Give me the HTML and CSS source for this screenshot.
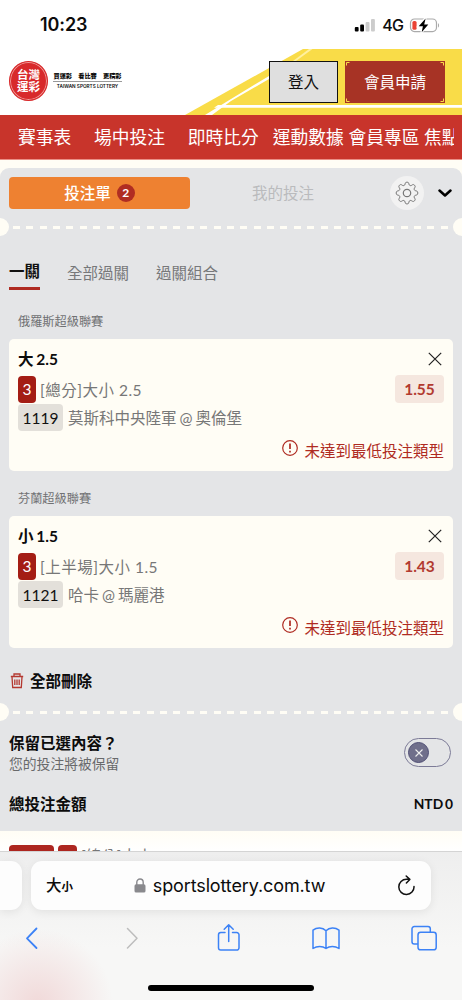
FILE: index.html
```html
<!DOCTYPE html>
<html lang="zh-Hant">
<head>
<meta charset="utf-8">
<title>台灣運彩</title>
<link rel="stylesheet" href="styles.css">
</head>
<body>
<div class="screen">
  <div class="status">
    <span class="clock">10:23</span>
    <div class="status-right">
      <svg width="22" height="14" viewBox="0 0 22 14"><rect x="0.8" y="9" width="3.8" height="4.6" rx="1"/><rect x="6.2" y="6.5" width="3.8" height="7.1" rx="1"/><rect x="11.6" y="4" width="3.9" height="9.6" rx="1" fill="#ccc"/><rect x="17" y="1" width="3.9" height="12.6" rx="1" fill="#ccc"/></svg>
      <span class="net">4G</span>
      <svg class="battery" width="31" height="17" viewBox="0 0 31 17"><rect x="1.5" y="2" width="26" height="12.6" rx="4" fill="none" stroke="#aaa" stroke-width="1.2"/><rect x="3.4" y="4" width="4.2" height="8.8" rx="1.6" fill="#ea4335"/><path d="M29 6.2c1.4.5 1.4 3.7 0 4.200z" fill="#aaa"/><path d="M16.600 1 9.300 9.300h4.200L12.400 15.500l7-8.100h-4.100z" stroke="#fff" stroke-width="2"/><path d="M16.600 1.500 9.700 9.200h4.200L12.700 15.200l6.600-7.700h-4.100z"/></svg>
    </div>
  </div>

  <header class="header">
    <svg class="stripes" width="462" height="66" viewBox="0 0 462 66"><path d="M303 0H462V66H185z" fill="#f9dc48"/><path d="M205 66 231 50 269 27V30L231 52 212 66z" fill="#fff"/><path d="M218 66 231 57.500V66z" fill="#f9dc48"/><path d="M293 12 309 0H312.500L296 12z" fill="#fff0a0"/><path d="M218 56H462V58.800H214z" fill="#fff"/></svg>
    <div class="brand">
      <div class="seal"><span>台灣</span><span>運彩</span></div>
      <div class="slogan"><b>買運彩　看比賽　更精彩</b><i>TAIWAN SPORTS LOTTERY</i></div>
    </div>
    <div class="account">
      <button class="login">登入</button>
      <button class="register"><svg width="100" height="42" viewBox="0 0 100 42"><path d="M1.500 4.500V1.500H4.500M95.500 1.500h3v3M98.500 37.500v3h-3M4.500 40.500h-3v-3" fill="none" stroke="#f9dc48"/></svg>會員申請</button>
    </div>
  </header>

  <nav class="nav"><div class="nav-track"><a>賽事表</a><a>場中投注</a><a>即時比分</a><a class="tight">運動數據</a><a class="tight">會員專區</a><a>焦點</a></div></nav>

  <main class="slip">
    <div class="slip-head">
      <div class="tab-active">投注單<span class="count">2</span></div>
      <div class="tab-muted">我的投注</div>
      <span class="gear"><svg width="24" height="24" viewBox="0 0 24 24" fill="none" stroke="#777" stroke-width="1"><path d="M12 1.200c1.500 0 1.700.6 1.900 1.900.2 1.400 1.700 2 2.800 1.200 1.100-.9 1.800-1.100 2.800-.1s.8 1.700 0 2.800c-.8 1.100-.2 2.600 1.200 2.800 1.300.2 2.100.6 2.100 2.200s-.8 2-2.100 2.200c-1.400.2-2 1.700-1.200 2.800.8 1.100 1 1.800 0 2.800s-1.700.8-2.800 0c-1.100-.9-2.600-.2-2.800 1.200-.2 1.300-.4 1.900-1.900 1.900s-1.700-.6-1.900-1.900c-.2-1.400-1.700-2.100-2.800-1.200-1.100.8-1.800 1-2.800 0s-.8-1.700 0-2.800c.8-1.100.2-2.600-1.200-2.800C2 14 1.200 13.600 1.200 12S2 10 3.300 9.800C4.700 9.600 5.300 8.100 4.500 7c-.8-1.100-1-1.800 0-2.800s1.700-.8 2.800.1c1.100.8 2.600.2 2.800-1.200.2-1.300.4-1.900 1.900-1.900z" stroke-linejoin="round"/><circle cx="12" cy="12" r="3.700" stroke-width="1.200"/></svg></span>
      <svg class="chev" width="14" height="9" viewBox="0 0 14 9"><path d="M1.500 1.500 7 6.500 12.500 1.500" fill="none" stroke="#000" stroke-width="2.500" stroke-linecap="round" stroke-linejoin="round"/></svg>
    </div>
    <div class="perforation"></div>

    <div class="modes"><span class="on">一關</span><span>全部過關</span><span>過關組合</span></div>

    <div class="league">俄羅斯超級聯賽</div>
    <section class="card">
      <div class="pick"><b>大 2.5</b><svg width="14" height="14" viewBox="0 0 14 14"><path d="M.8.8 13.200 13.200M13.200.8.8 13.200" stroke="#222" stroke-width="1.200"/></svg></div>
      <div class="market"><em class="legs">3</em><span>[總分]大小 2.5</span><strong class="odds">1.55</strong></div>
      <div class="match"><em class="code">1119</em><span>莫斯科中央陸軍 @ 奧倫堡</span></div>
      <div class="alert"><svg width="16" height="16" viewBox="0 0 16 16"><circle cx="8" cy="8" r="7.300" fill="none" stroke="#af2b22" stroke-width="1.200"/><path d="M8 3.500V9M8 10.700v1.800" stroke="#af2b22" stroke-width="1.700"/></svg>未達到最低投注類型</div>
    </section>

    <div class="league second">芬蘭超級聯賽</div>
    <section class="card">
      <div class="pick"><b>小 1.5</b><svg width="14" height="14" viewBox="0 0 14 14"><path d="M.8.8 13.200 13.200M13.200.8.8 13.200" stroke="#222" stroke-width="1.200"/></svg></div>
      <div class="market"><em class="legs">3</em><span>[上半場]大小 1.5</span><strong class="odds">1.43</strong></div>
      <div class="match"><em class="code">1121</em><span>哈卡 @ 瑪麗港</span></div>
      <div class="alert"><svg width="16" height="16" viewBox="0 0 16 16"><circle cx="8" cy="8" r="7.300" fill="none" stroke="#af2b22" stroke-width="1.200"/><path d="M8 3.500V9M8 10.700v1.800" stroke="#af2b22" stroke-width="1.700"/></svg>未達到最低投注類型</div>
    </section>

    <div class="clear"><svg width="14" height="16" viewBox="0 0 14 16" fill="none" stroke="#b43830" stroke-width="1.300"><path d="M.8 3.500h12.400M4 3.300V1h6v2.300M2 3.700l.7 10.800h8.600L12 3.700M4.800 6.500v5.500M7 6.500v5.500M9.200 6.500v5.500"/></svg>全部刪除</div>
    <div class="perforation"></div>

    <div class="keep">
      <div><h2>保留已選內容？</h2><p>您的投注將被保留</p></div>
      <div class="toggle"><span><svg width="8" height="8" viewBox="0 0 8 8"><path d="M.5.5 7.500 7.500M7.500.5.5 7.500" stroke="#eee" stroke-width="1.100"/></svg></span></div>
    </div>
    <div class="total"><span>總投注金額</span><span class="sum">NTD 0</span></div>
  </main>

  <div class="peek"><i class="peek-a"></i><i class="peek-b"></i><span>[總分]大小</span></div>

  <footer class="browser">
    <div class="bar-row">
      <div class="prev-tab"></div>
      <div class="address">
        <span class="aa">大<small>小</small></span>
        <span class="url"><svg width="12" height="15" viewBox="0 0 12 15"><path d="M2.800 7V4.200a3.200 3.200 0 0 1 6.400 0V7" fill="none" stroke="#89898d" stroke-width="1.400"/><rect x=".5" y="6.300" width="11" height="8.300" rx="1.600" fill="#89898d"/></svg>sportslottery.com.tw</span>
        <svg class="reload" width="19" height="21" viewBox="0 0 19 21" fill="none" stroke="#111" stroke-width="1.500" stroke-linecap="round" stroke-linejoin="round"><path d="M17 11.500A7.600 7.600 0 1 1 9.500 4.300h3M9.200 1 12.800 4.400 9.400 8"/></svg>
      </div>
    </div>
    <div class="tools">
      <svg width="28" height="30" viewBox="0 0 28 30"><path d="M18.500 5.500 9 15.300 18.500 25" stroke-width="1.800"/></svg>
      <svg class="off" width="28" height="30" viewBox="0 0 28 30"><path d="M11.500 5.500 21 15.300 11.500 25" stroke-width="1.500"/></svg>
      <svg width="28" height="30" viewBox="0 0 28 30"><path d="M11 9.500H6.800a2.300 2.300 0 0 0-2.300 2.300v13a2.300 2.300 0 0 0 2.300 2.300h15.900a2.300 2.300 0 0 0 2.300-2.300v-13a2.300 2.300 0 0 0-2.300-2.300H18.500M14.700 18.500V2M10.200 6.200 14.700 1.700l4.500 4.500"/></svg>
      <svg width="28" height="30" viewBox="0 0 28 30"><path d="M14 7.800C10.500 4.400 5 4.200 1 7.200V25.500C5 22.800 10.500 22.800 14 25.500 17.500 22.800 23 22.800 27 25.500V7.200C23 4.200 17.500 4.400 14 7.800V25.500"/></svg>
      <svg width="28" height="30" viewBox="0 0 28 30"><path d="M7.500 21H4.300A2.300 2.300 0 0 1 2 18.700V5.800a2.300 2.300 0 0 1 2.300-2.300H18a2.300 2.300 0 0 1 2.300 2.300V9"/><rect x="8" y="9.300" width="18.200" height="17.500" rx="2.600"/></svg>
    </div>
    <div class="home"></div>
  </footer>
</div>
</body>
</html>
```

FILE: styles.css
```css
* { box-sizing: border-box; }
body { margin: 0; }
.screen {
  width: 462px; height: 1000px; overflow: hidden;
  display: flex; flex-direction: column;
  background: #fffdf5; color: #0c0c0c;
  font: 15.5px/20px Lato, "Noto Sans CJK TC", sans-serif;
}
svg { display: block; flex: none; }
em, i { font-style: normal; }

.status {
  height: 49px; flex: none; padding: 1px 25px 0 40px;
  display: flex; align-items: center; justify-content: space-between;
  background: #fff; font-family: Inter, sans-serif;
}
.clock { font-size: 18px; font-weight: 600; letter-spacing: -0.1px; }
.status-right { display: flex; align-items: center; gap: 6px; padding-right: 0; }
.net { font-size: 16px; font-weight: 500; letter-spacing: -0.9px; }
.battery { margin: 0 -3px 0 0; }

.header {
  position: relative; height: 66px; flex: none;
  padding: 12px 17px 0 9px; background: #fff;
  display: flex; justify-content: space-between; align-items: flex-start;
}
.stripes { position: absolute; left: 0; top: 0; }
.brand { position: relative; display: flex; gap: 5px; align-items: center; }
.seal {
  width: 39px; height: 40px; border-radius: 50%; background: #d8292b;
  border: 1px solid #d8292b; box-shadow: inset 0 0 0 1px #ef9b98;
  color: #fff; font-weight: 700; font-size: 11.500px; line-height: 12px;
  display: flex; flex-direction: column; align-items: center; justify-content: center;
}
.slogan { width: 69px; display: flex; flex-direction: column; text-align: center; white-space: nowrap; }
.slogan b { font-size: 6.200px; font-weight: 900; line-height: 10px; border-bottom: 1px solid #999; }
.slogan i { font: 600 4.700px/9px Inter, sans-serif; }
.account { position: relative; display: flex; gap: 7px; }
.account button { height: 42px; padding: 0; font: inherit; }
.login { width: 69px; background: #dfdfdf; border: 1px solid #111; color: #111; }
.register { position: relative; width: 100px; background: #a73325; border: 0; color: #fff; }
.register svg { position: absolute; left: 0; top: 0; }

.nav {
  height: 45px; flex: none; margin-bottom: 8px; padding: 0 8px 0 18px;
  background: #c8342b; border-bottom: 1px solid #ea8f86;
}
.nav-track {
  height: 44px; display: flex; align-items: center; overflow: hidden;
  color: #fff; font-size: 17.750px; white-space: nowrap;
}
.nav a { margin-right: 22.700px; flex: none; }
.nav a:nth-child(3) { margin-right: 14px; }
.nav .tight { margin-right: 4.700px; }

.slip { height: 663px; flex: none; background: #e4e5e7; border-radius: 9px 9px 0 0; }
.slip-head { height: 50px; padding: 0 10px 0 9px; display: flex; align-items: center; }
.tab-active {
  width: 181px; height: 32px; border-radius: 4px; background: #ee8131; color: #fff;
  display: flex; align-items: center; justify-content: center; gap: 6px; font-weight: 500;
}
.count {
  width: 18px; height: 18px; border-radius: 50%; background: #b02d22;
  font-size: 12px; line-height: 18px; text-align: center; font-weight: 700;
}
.tab-muted { flex: 1; text-align: center; padding-right: 14px; color: #babbbd; }
.gear {
  width: 34px; height: 34px; border-radius: 50%; background: #f2f2f2;
  display: flex; align-items: center; justify-content: center; margin: -1px 14px 0 0;
}
.perforation {
  height: 18px; display: flex; align-items: center; justify-content: space-between;
  background: repeating-linear-gradient(90deg, #fffdf5 0 7px, transparent 7px 13.370px) 13px 8px / 436px 3px no-repeat;
}
.perforation::before, .perforation::after {
  content: ""; width: 9px; height: 18px; background: #fffdf5; border-radius: 0 9px 9px 0;
}
.perforation::after { border-radius: 9px 0 0 9px; }

.modes { height: 54px; padding: 26px 9px 0; display: flex; gap: 27px; color: #77787a; line-height: 22px; }
.modes span { height: 28px; }
.modes .on { height: 28px; line-height: 19px; font-weight: 700; color: #111; border-bottom: 3px solid #af2b22; }
.league { height: 49px; padding: 22px 18px 0; font-size: 12.200px; color: #707173; }
.league.second { height: 45px; padding-top: 18px; }
.card { height: 132px; margin: 0 9px; padding: 10px 9px 0; background: #fffdf5; border-radius: 5px; }
.pick { height: 20px; display: flex; justify-content: space-between; align-items: center; padding-right: 2px; }
.pick b { word-spacing: -1px; }
.market, .match { display: flex; align-items: center; color: #777; }
.market { height: 28px; margin-top: 6px; }
.market span { letter-spacing: .5px; margin-left: 4px; padding-top: 1px; }
.legs { width: 18px; height: 27px; line-height: 27px; border-radius: 4px; background: #a41d14; color: #fff; text-align: center; }
.odds { width: 49px; height: 28px; line-height: 28px; margin-left: auto; border-radius: 4px; background: #f5e7df; color: #b23a30; text-align: center; }
.match { height: 27px; margin-top: 1px; }
.match span { margin-left: 5px; word-spacing: -1px; }
.code { width: 45px; height: 27px; line-height: 28px; border-radius: 4px; background: #e3e0da; color: #111; text-align: center; }
.alert { height: 20px; line-height: 22px; margin-top: 9px; display: flex; justify-content: flex-end; gap: 6px; color: #af2b22; }
.clear { height: 55px; padding: 14px 10px 0; display: flex; gap: 6px; font-weight: 700; line-height: 39px; }
.clear svg { margin-top: 11px; }

.keep { display: flex; justify-content: space-between; padding: 12px 11px 0 9px; height: 66px; }
.keep h2 { margin: 0; font-size: 15.500px; line-height: 20px; }
.keep p { margin: 1px 0 0; font-size: 13.800px; color: #68696b; }
.toggle { width: 47px; height: 29px; margin-top: 5px; padding: 3px; border: 1px solid #7c7b97; border-radius: 15px; }
.toggle span { width: 21px; height: 21px; border-radius: 50%; background: #706f8b; border: 1px solid #504f75; display: flex; align-items: center; justify-content: center; }
.total { display: flex; justify-content: space-between; padding: 7px 9px 0; font-weight: 700; }
.sum { font-size: 13.800px; word-spacing: -1.500px; }

.peek {
  height: 20px; flex: none; padding: 14px 9px 0; display: flex; gap: 4px; overflow: hidden;
  background: linear-gradient(#fffdf5, #fff); color: #777;
}
.peek i { height: 27px; border-radius: 4px; background: #ad261f; }
.peek-a { width: 45px; }
.peek-b { width: 19px; }
.peek span { margin-top: 1px; }

.browser {
  height: 149px; flex: none; border-top: 1px solid #d4d4d4;
  background: radial-gradient(circle at 38px 152px, #f1d9d9 0, rgba(241, 217, 217, 0) 75px), linear-gradient(#eeeeee, #f7f7f6 65%);
}
.bar-row { padding-top: 9px; display: flex; gap: 9px; }
.prev-tab, .address { height: 49px; background: #fdfdfd; box-shadow: 0 2px 10px rgba(0, 0, 0, .08); }
.prev-tab { width: 22px; border-radius: 0 11px 11px 0; }
.address {
  width: 400px; border-radius: 11px; padding: 0 15px;
  display: flex; align-items: center; justify-content: space-between;
}
.aa { font-weight: 500; }
.aa small { font-size: 11.500px; font-weight: 700; }
.url { display: flex; align-items: center; gap: 7px; margin-right: 7px; font: 18.200px/22px Inter, sans-serif; letter-spacing: -0.1px; }
.url { margin-left: -4px; letter-spacing: 0; font-size: 18px; }
.url { letter-spacing: -0.12px; }
.tools { height: 56px; padding: 0 24px 0 18px; display: flex; align-items: center; justify-content: space-between; }
.tools svg { fill: none; stroke: #3c82f6; stroke-width: 1.500; stroke-linecap: round; stroke-linejoin: round; }
.tools .off { stroke: #bdbdbd; }
.home { width: 166px; height: 5.500px; margin: 19px 0 0 148px; border-radius: 3px; background: #000; }
```
